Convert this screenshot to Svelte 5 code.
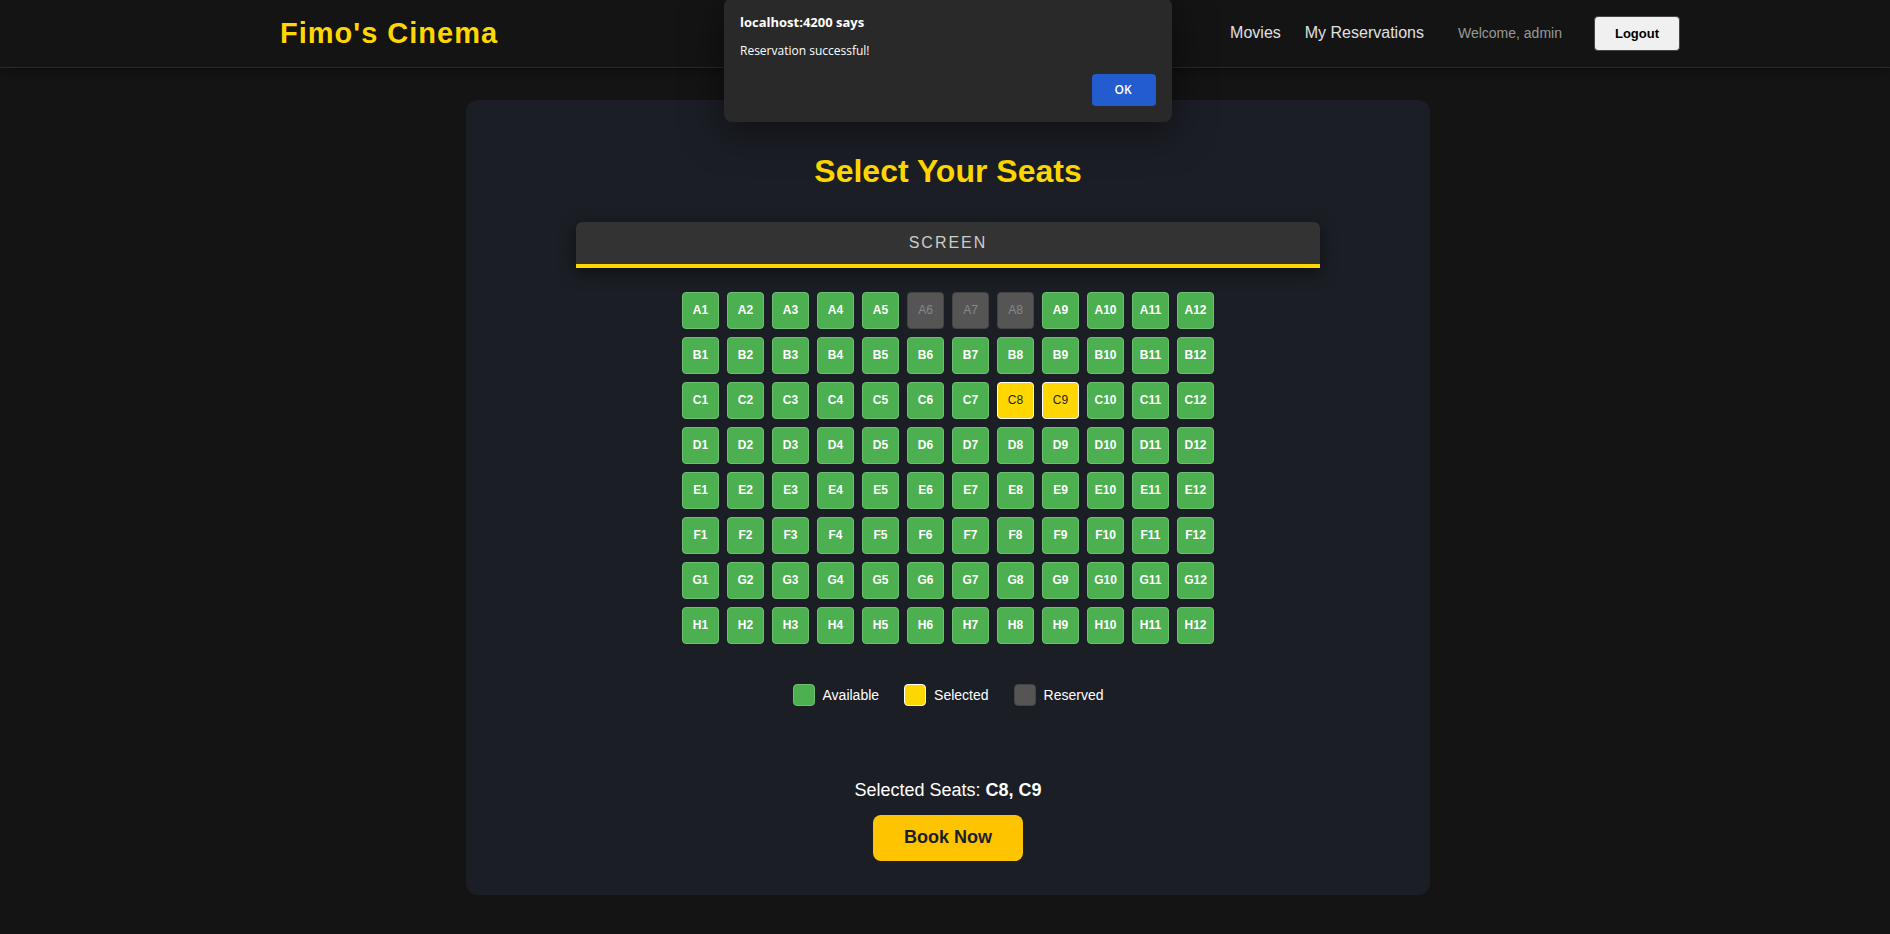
<script>
  const rows = ['A', 'B', 'C', 'D', 'E', 'F', 'G', 'H'];
  const columns = Array.from({ length: 12 }, (_, i) => i + 1);
  const reserved = ['A6', 'A7', 'A8'];

  let selected = $state(['C8', 'C9']);
  let dialogOpen = $state(true);

  function toggle(seat) {
    selected = selected.includes(seat)
      ? selected.filter((s) => s !== seat)
      : [...selected, seat];
  }
</script>

<header class="navbar">
  <div class="navbar-inner">
    <a class="logo" href="#home">Fimo's Cinema</a>
    <nav>
      <a href="#movies">Movies</a>
      <a href="#reservations">My Reservations</a>
      <span class="welcome">Welcome, admin</span>
      <button class="logout" type="button">Logout</button>
    </nav>
  </div>
</header>

<main>
  <section class="card">
    <h1>Select Your Seats</h1>
    <div class="screen">SCREEN</div>

    <div class="seats">
      {#each rows as row}
        {#each columns as column}
          {@const seat = row + column}
          <button
            type="button"
            class="seat"
            class:selected={selected.includes(seat)}
            class:reserved={reserved.includes(seat)}
            disabled={reserved.includes(seat)}
            aria-pressed={selected.includes(seat)}
            onclick={() => toggle(seat)}>{seat}</button>
        {/each}
      {/each}
    </div>

    <ul class="legend">
      <li><span class="swatch"></span>Available</li>
      <li><span class="swatch selected"></span>Selected</li>
      <li><span class="swatch reserved"></span>Reserved</li>
    </ul>

    <p class="summary">Selected Seats: <strong>{selected.join(', ')}</strong></p>
    <button class="book" type="button" onclick={() => (dialogOpen = true)}>Book Now</button>
  </section>
</main>

{#if dialogOpen}
  <div class="alert" role="alertdialog" aria-labelledby="alert-title" aria-describedby="alert-text">
    <h2 id="alert-title">localhost:4200 says</h2>
    <p id="alert-text">Reservation successful!</p>
    <button type="button" onclick={() => (dialogOpen = false)}>OK</button>
  </div>
{/if}

<style>
  :global(body) {
    margin: 0;
    background: #141414;
    color: #fff;
    font-family: "Liberation Sans", Arial, sans-serif;
  }

  button {
    font-family: inherit;
    cursor: pointer;
  }

  .navbar {
    box-sizing: border-box;
    height: 68px;
    padding-left: 70px;
    border-bottom: 1px solid #2a2a2a;
    background: #141414;
    box-shadow: 0 2px 8px rgba(0, 0, 0, 0.4);
  }

  .navbar-inner {
    display: flex;
    align-items: center;
    justify-content: space-between;
    max-width: 1400px;
    height: 66px;
    margin: 0 auto;
  }

  .logo {
    color: #ffd700;
    font-size: 29px;
    font-weight: 700;
    letter-spacing: 1px;
    text-decoration: none;
  }

  nav {
    display: flex;
    align-items: center;
    gap: 24px;
  }

  nav a {
    color: #e0e0e0;
    font-size: 16px;
    text-decoration: none;
  }

  .welcome {
    margin: 0 8px 0 10px;
    color: #999;
    font-size: 14px;
  }

  .logout {
    height: 35px;
    padding: 0 20px;
    border: 1px solid #444;
    border-radius: 4px;
    background: #f0f0f0;
    color: #000;
    font-size: 13px;
    font-weight: 700;
  }

  main {
    padding: 32px 0 39px 6px;
  }

  .card {
    box-sizing: border-box;
    display: flex;
    flex-direction: column;
    align-items: center;
    max-width: 964px;
    margin: 0 auto;
    padding: 52px 110px 34px;
    border-radius: 12px;
    background: #1b1e25;
  }

  h1 {
    margin: 0 0 32px;
    color: #ffd700;
    font-size: 32px;
    line-height: 38px;
  }

  .screen {
    align-self: stretch;
    margin-bottom: 24px;
    border-bottom: 4px solid #ffd700;
    border-radius: 6px 6px 0 0;
    background: #333;
    box-shadow: 0 4px 16px rgba(0, 0, 0, 0.5);
    color: #ccc;
    font-size: 16px;
    letter-spacing: 2px;
    line-height: 42px;
    text-align: center;
  }

  .seats {
    display: grid;
    grid-template-columns: repeat(12, 37px);
    grid-auto-rows: 37px;
    gap: 8px;
  }

  .seat,
  .swatch {
    box-sizing: border-box;
    padding: 0 0 2px;
    border: 1px solid #6fbf73;
    border-radius: 4px;
    background: #4caf50;
    color: #fff;
    font-size: 12px;
    font-weight: 700;
  }

  .selected {
    border-color: #fff;
    background: #ffd700;
    color: #222;
    font-weight: 400;
  }

  .reserved {
    border-color: #444;
    background: #555;
    color: #888;
    font-weight: 400;
    cursor: not-allowed;
  }

  .legend {
    display: flex;
    gap: 25px;
    margin: 40px 0 72px;
    padding: 0;
    font-size: 14px;
    line-height: 22px;
    list-style: none;
  }

  .legend li {
    display: flex;
    gap: 8px;
  }

  .swatch {
    width: 22px;
    height: 22px;
    cursor: default;
  }

  .summary {
    margin: 0 0 13px;
    font-size: 18px;
    line-height: 24px;
  }

  .book {
    height: 46px;
    padding: 0 31px 2px;
    border: 0;
    border-radius: 8px;
    background: #ffc400;
    color: #1b1e25;
    font-size: 18px;
    font-weight: 700;
  }

  .alert {
    position: absolute;
    top: -2px;
    left: calc(50% + 3px);
    box-sizing: border-box;
    display: flex;
    flex-direction: column;
    width: 448px;
    padding: 16px;
    border-radius: 8px;
    background: #292929;
    box-shadow: 0 8px 40px rgba(0, 0, 0, 0.5);
    font-family: "Open Sans", "Noto Sans", sans-serif;
    font-size: 12px;
    transform: translateX(-50%);
  }

  .alert h2 {
    margin: 0 0 13px;
    font-size: 13px;
    font-weight: 700;
    line-height: 16px;
  }

  .alert p {
    margin: 0 0 15px;
    line-height: 16px;
  }

  .alert button {
    align-self: flex-end;
    width: 64px;
    height: 32px;
    padding: 0 2px 2px 0;
    border: 0;
    border-radius: 4px;
    background: #235ccf;
    color: #fff;
    font-size: 12px;
    font-weight: 600;
  }
</style>
